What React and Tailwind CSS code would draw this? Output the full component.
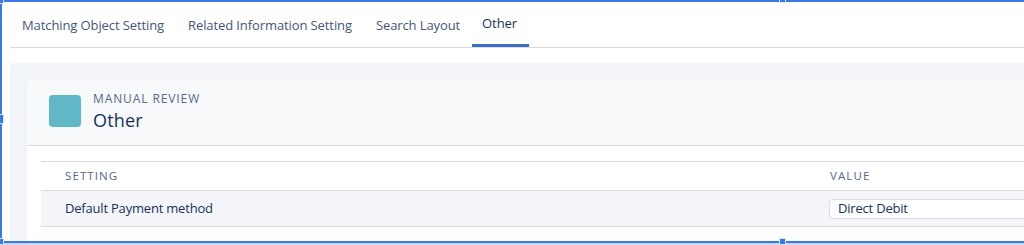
const tabs = ["Matching Object Setting", "Related Information Setting", "Search Layout", "Other"];

function Handle({ className }) {
  return <div className={`absolute w-[7px] h-[7px] bg-[#3b78e7] border border-[#dbe6fb] ${className}`} />;
}

export default function App() {
  return (
    <div className="relative w-[1024px] h-[245px] overflow-hidden bg-white font-['Open_Sans',sans-serif]">
      <nav className="ml-[10px] flex h-[48px] border-b border-[#dddbe0]">
        {tabs.map((t) => {
          const active = t === "Other";
          return (
            <div
              key={t}
              className={`flex items-center px-3 pt-[5px] text-[13px] tracking-[-0.1px] ${
                active ? "border-b-[3px] border-[#3b6fc4] text-[#16325c] pb-[1px] pl-[10px]" : "text-[#45567a]"
              }`}
            >
              {t}
            </div>
          );
        })}
      </nav>

      <div className="mt-[15px] ml-[10px] rounded-tl-[4px] bg-[#f3f4f7] pl-[17px] pt-[17px]">
        <div className="rounded-tl-[4px] bg-[#f8f9fb]">
          <div className="flex h-[66px] items-start gap-[12px] border-b border-[#dddbe0] pl-[22px] pt-[15px]">
            <div className="h-[32px] w-[32px] rounded-[4px] bg-[#60b8c6]" />
            <div className="mt-[-3px] flex flex-col">
              <span className="text-[12px] uppercase leading-[14px] tracking-[0.9px] text-[#54698d]">
                Manual Review
              </span>
              <span className="mt-[4px] text-[18px] leading-[20px] tracking-[0.2px] text-[#16325c]">Other</span>
            </div>
          </div>
          <div className="bg-white pl-[14px] pt-[15px] pb-[20px]">
            <div className="grid grid-cols-[765px_1fr] border-t border-[#dddbe0] text-[11.5px]">
              <div className="flex h-[29px] items-center border-b border-[#dddbe0] pl-[24px] uppercase tracking-[1.1px] text-[#54698d]">
                Setting
              </div>
              <div className="flex h-[29px] items-center border-b border-[#dddbe0] pl-[24px] uppercase tracking-[1.1px] text-[#54698d]">
                Value
              </div>
              <div className="flex h-[36px] items-center border-b border-[#dddbe0] bg-[#f4f5f8] pl-[24px] text-[13px] tracking-[-0.2px] text-[#16325c]">
                Default Payment method
              </div>
              <div className="flex h-[36px] items-center border-b border-[#dddbe0] bg-[#f4f5f8] pl-[23px]">
                <div className="flex h-[20px] w-full items-center rounded-l-[4px] border border-r-0 border-[#d8dde6] bg-white pl-[8px] text-[13px] tracking-[-0.2px] text-[#16325c]">
                  Direct Debit
                </div>
              </div>
            </div>
          </div>
        </div>
      </div>

      <div className="absolute left-0 top-0 h-[2px] w-full bg-[#3b78e7]" />
      <div className="absolute left-0 top-0 h-[243px] w-[2px] bg-[#3b78e7]" />
      <div className="absolute left-0 top-[241px] h-[2px] w-full bg-[#3b78e7]" />
      <div className="absolute left-0 top-[243px] h-[2px] w-full bg-[#c5d6f6]" />
      <Handle className="left-[-3px] top-[-3px]" />
      <Handle className="left-[779px] top-[-4px]" />
      <Handle className="left-[-3px] top-[114px] h-[10px]" />
      <Handle className="left-[-3px] top-[238px]" />
      <Handle className="left-[779px] top-[238px]" />
    </div>
  );
}
